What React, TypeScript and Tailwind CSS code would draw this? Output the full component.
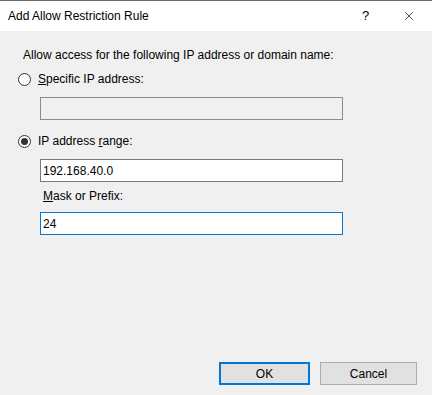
import { X } from "lucide-react";

const font = { fontFamily: '"Segoe UI", "Liberation Sans", Arial, sans-serif' };

const Radio = ({ checked }: { checked?: boolean }) => (
  <span className="flex h-[13px] w-[13px] items-center justify-center rounded-full border border-[#333333] bg-white">
    {checked && <span className="h-[7px] w-[7px] rounded-full bg-[#333333]" />}
  </span>
);

export default function App() {
  return (
    <div
      className="flex h-[395px] w-[432px] flex-col border-t border-[#6b6b6b] bg-[#f0f0f0] text-[12px] leading-4 text-black"
      style={font}
    >
      {/* title bar */}
      <div className="flex h-[30px] items-center bg-white pl-2">
        <span className="flex-1">Add Allow Restriction Rule</span>
        <span className="mr-[10px] w-[14px] text-[13px]">?</span>
        <span className="flex w-[46px] justify-center">
          <X className="h-[14px] w-[14px]" strokeWidth={1.2} />
        </span>
      </div>

      {/* body */}
      <div className="flex flex-col pl-[18px]">
        <p className="mt-[16px] pl-[5px]">Allow access for the following IP address or domain name:</p>

        <label className="mt-[8px] flex items-center gap-[7px]">
          <Radio />
          <span>
            <u>S</u>pecific IP address:
          </span>
        </label>
        <div className="ml-[22px] mt-[10px] h-[23px] w-[303px] border border-[#8c8c8c] bg-[#f0f0f0]" />

        <label className="mt-[13px] flex items-center gap-[7px]">
          <Radio checked />
          <span>
            IP address <u>r</u>ange:
          </span>
        </label>
        <input
          readOnly
          value="192.168.40.0"
          className="ml-[22px] mt-[10px] h-[23px] w-[303px] border border-[#7a7a7a] bg-white px-[2px] outline-none"
        />

        <span className="ml-[25px] mt-[6px]">
          <u>M</u>ask or Prefix:
        </span>
        <input
          readOnly
          value="24"
          className="ml-[22px] mt-[8px] h-[23px] w-[303px] border border-[#0078d7] bg-white px-[2px] outline-none"
        />
      </div>

      {/* buttons */}
      <div className="mt-auto mb-[10px] flex justify-end gap-[10px] pr-[15px]">
        <button className="h-[23px] w-[91px] border-2 border-[#0078d7] bg-[#e1e1e1]">OK</button>
        <button className="h-[23px] w-[97px] border border-[#adadad] bg-[#e1e1e1]">Cancel</button>
      </div>
    </div>
  );
}
